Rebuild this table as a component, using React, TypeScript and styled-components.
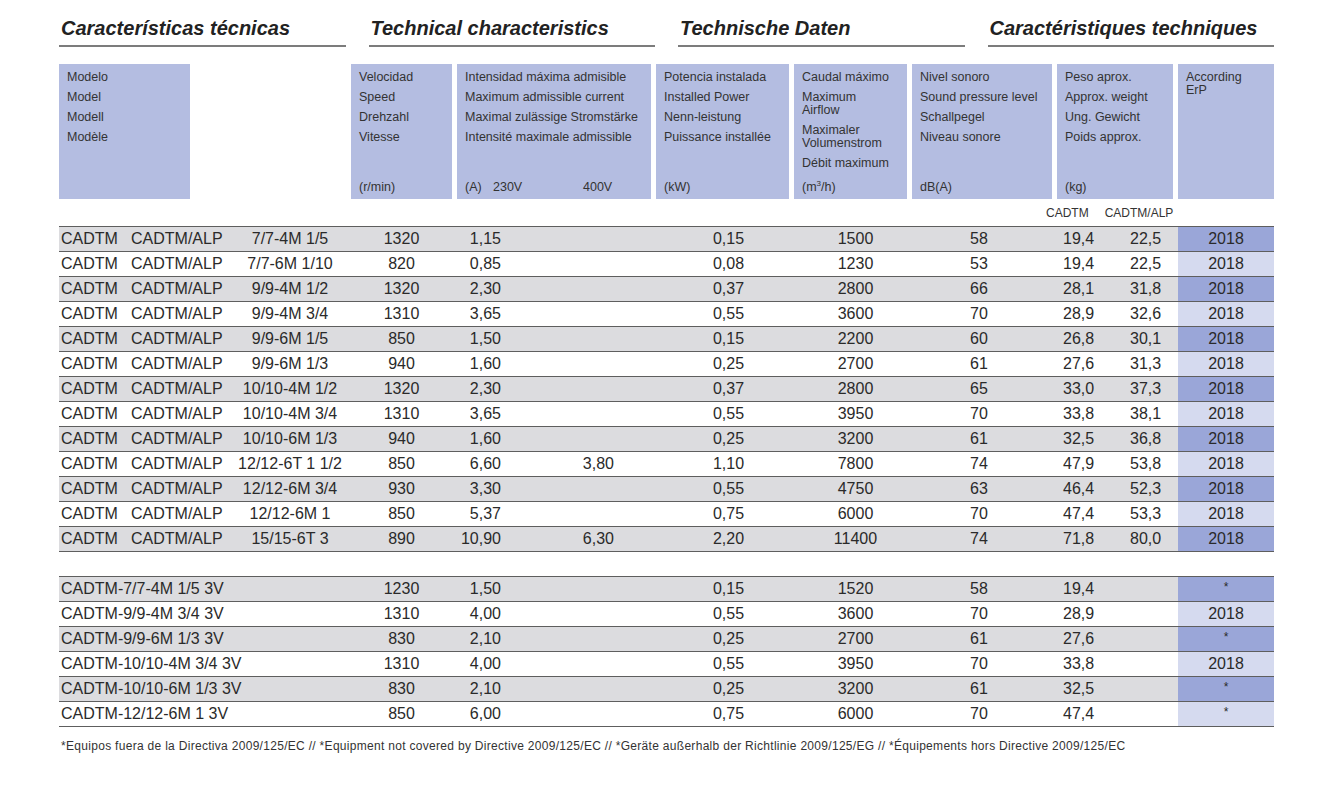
import React from 'react'
import styled, { createGlobalStyle } from 'styled-components'

const COLS = '287px 101px 194px 133px 113px 140px 116px 96px'

const GlobalStyle = createGlobalStyle`
  body {
    margin: 0;
    background: #fff;
    font-family: "Liberation Sans", Arial, sans-serif;
    color: #2c2c2c;
  }
`

const Page = styled.div`
  width: 1215px;
  padding: 16px 0 0 59px;
`

const TitleRow = styled.div`
  display: grid;
  grid-template-columns: repeat(4, 1fr);
  column-gap: 23px;
`

const Title = styled.h2`
  margin: 0;
  padding: 0 0 5px 2px;
  font: italic bold 20px/24px "Liberation Sans", Arial, sans-serif;
  color: #222;
  border-bottom: 2px solid #7c7c7c;
`

const HeaderGrid = styled.div`
  display: grid;
  grid-template-columns: ${COLS};
  column-gap: 5px;
  height: 134px;
  margin-top: 17px;
`

const HeadCell = styled.div<{ $width?: number }>`
  display: flex;
  flex-direction: column;
  gap: 7px;
  width: ${p => (p.$width ? `${p.$width}px` : 'auto')};
  box-sizing: border-box;
  padding: 7px 8px 2px;
  background: #b4bde1;
  font-size: 12.5px;
  line-height: 13px;
  color: #333;
  white-space: nowrap;
`

const Unit = styled.div`
  margin-top: auto;
  line-height: 20px;
`

const UnitPart = styled.span<{ $w: number }>`
  display: inline-block;
  width: ${p => p.$w}px;
`

const Sup = styled.sup`
  font-size: 8px;
  line-height: 0;
  vertical-align: 5px;
`

const SubLabels = styled.div`
  display: grid;
  grid-template-columns: ${COLS};
  column-gap: 5px;
  margin-top: 8px;
  font-size: 12px;
  line-height: 14px;
  color: #333;
`

const SubPair = styled.div`
  grid-column: 7;
  display: flex;
  gap: 16px;
  margin-left: -11px;
  white-space: nowrap;
`

const Table = styled.div<{ $mt: number }>`
  margin-top: ${p => p.$mt}px;
  border-top: 1px solid #5e5e5e;
`

const Row = styled.div<{ $alt: boolean }>`
  display: grid;
  grid-template-columns: ${COLS};
  column-gap: 5px;
  height: 24px;
  border-bottom: 1px solid #5e5e5e;
  background: ${p => (p.$alt ? '#dcdcdf' : '#fff')};
  font-size: 16px;
  line-height: 24px;
  color: #2a2a2a;
  white-space: nowrap;
`

const ModelCell = styled.div`
  display: grid;
  grid-template-columns: 70px 101px 116px;
  padding-left: 2px;
`

const Code = styled.span`
  text-align: center;
`

const Plain = styled.div`
  padding-left: 2px;
`

const Center = styled.div<{ $shift?: number }>`
  text-align: center;
  padding-left: ${p => Math.max(p.$shift ?? 0, 0)}px;
  padding-right: ${p => Math.max(-(p.$shift ?? 0), 0)}px;
`

const Current = styled.div`
  display: grid;
  grid-template-columns: 44px 113px;
  text-align: right;
`

const Weight = styled.div`
  display: grid;
  grid-template-columns: 67px 1fr;
  padding-left: 6px;
`

const Erp = styled.div<{ $alt: boolean }>`
  background: ${p => (p.$alt ? '#9aa6d8' : '#d5daef')};
  text-align: center;
`

const Star = styled.span`
  font-size: 12px;
  vertical-align: top;
  line-height: 20px;
`

const Footer = styled.p`
  margin: 12px 0 0 2px;
  font-size: 12px;
  letter-spacing: 0.3px;
  line-height: 14px;
  color: #333;
  white-space: nowrap;
`

type Item = {
  code: string
  speed: string
  a230: string
  a400: string
  kw: string
  flow: string
  db: string
  kg1: string
  kg2: string
  erp: string
}

const mk = (r: string[]): Item => ({
  code: r[0],
  speed: r[1],
  a230: r[2],
  a400: r[3],
  kw: r[4],
  flow: r[5],
  db: r[6],
  kg1: r[7],
  kg2: r[8],
  erp: r[9],
})

const mainRows: Item[] = [
  ['7/7-4M 1/5', '1320', '1,15', '', '0,15', '1500', '58', '19,4', '22,5', '2018'],
  ['7/7-6M 1/10', '820', '0,85', '', '0,08', '1230', '53', '19,4', '22,5', '2018'],
  ['9/9-4M 1/2', '1320', '2,30', '', '0,37', '2800', '66', '28,1', '31,8', '2018'],
  ['9/9-4M 3/4', '1310', '3,65', '', '0,55', '3600', '70', '28,9', '32,6', '2018'],
  ['9/9-6M 1/5', '850', '1,50', '', '0,15', '2200', '60', '26,8', '30,1', '2018'],
  ['9/9-6M 1/3', '940', '1,60', '', '0,25', '2700', '61', '27,6', '31,3', '2018'],
  ['10/10-4M 1/2', '1320', '2,30', '', '0,37', '2800', '65', '33,0', '37,3', '2018'],
  ['10/10-4M 3/4', '1310', '3,65', '', '0,55', '3950', '70', '33,8', '38,1', '2018'],
  ['10/10-6M 1/3', '940', '1,60', '', '0,25', '3200', '61', '32,5', '36,8', '2018'],
  ['12/12-6T 1 1/2', '850', '6,60', '3,80', '1,10', '7800', '74', '47,9', '53,8', '2018'],
  ['12/12-6M 3/4', '930', '3,30', '', '0,55', '4750', '63', '46,4', '52,3', '2018'],
  ['12/12-6M 1', '850', '5,37', '', '0,75', '6000', '70', '47,4', '53,3', '2018'],
  ['15/15-6T 3', '890', '10,90', '6,30', '2,20', '11400', '74', '71,8', '80,0', '2018'],
].map(mk)

const threeSpeedRows: Item[] = [
  ['CADTM-7/7-4M 1/5 3V', '1230', '1,50', '', '0,15', '1520', '58', '19,4', '', '*'],
  ['CADTM-9/9-4M 3/4 3V', '1310', '4,00', '', '0,55', '3600', '70', '28,9', '', '2018'],
  ['CADTM-9/9-6M 1/3 3V', '830', '2,10', '', '0,25', '2700', '61', '27,6', '', '*'],
  ['CADTM-10/10-4M 3/4 3V', '1310', '4,00', '', '0,55', '3950', '70', '33,8', '', '2018'],
  ['CADTM-10/10-6M 1/3 3V', '830', '2,10', '', '0,25', '3200', '61', '32,5', '', '*'],
  ['CADTM-12/12-6M 1 3V', '850', '6,00', '', '0,75', '6000', '70', '47,4', '', '*'],
].map(mk)

function DataRow({ item, alt, full }: { item: Item; alt: boolean; full: boolean }) {
  return (
    <Row $alt={alt}>
      {full ? (
        <ModelCell>
          <span>CADTM</span>
          <span>CADTM/ALP</span>
          <Code>{item.code}</Code>
        </ModelCell>
      ) : (
        <Plain>{item.code}</Plain>
      )}
      <Center>{item.speed}</Center>
      <Current>
        <span>{item.a230}</span>
        <span>{item.a400}</span>
      </Current>
      <Center $shift={12}>{item.kw}</Center>
      <Center $shift={10}>{item.flow}</Center>
      <Center $shift={-6}>{item.db}</Center>
      <Weight>
        <span>{item.kg1}</span>
        <span>{item.kg2}</span>
      </Weight>
      <Erp $alt={alt}>{item.erp === '*' ? <Star>*</Star> : item.erp}</Erp>
    </Row>
  )
}

export default function App() {
  return (
    <>
      <GlobalStyle />
      <Page>
        <TitleRow>
          <Title>Características técnicas</Title>
          <Title>Technical characteristics</Title>
          <Title>Technische Daten</Title>
          <Title>Caractéristiques techniques</Title>
        </TitleRow>

        <HeaderGrid>
          <HeadCell $width={131}>
            <div>Modelo</div>
            <div>Model</div>
            <div>Modell</div>
            <div>Modèle</div>
          </HeadCell>
          <HeadCell>
            <div>Velocidad</div>
            <div>Speed</div>
            <div>Drehzahl</div>
            <div>Vitesse</div>
            <Unit>(r/min)</Unit>
          </HeadCell>
          <HeadCell>
            <div>Intensidad máxima admisible</div>
            <div>Maximum admissible current</div>
            <div>Maximal zulässige Stromstärke</div>
            <div>Intensité maximale admissible</div>
            <Unit>
              <UnitPart $w={28}>(A)</UnitPart>
              <UnitPart $w={90}>230V</UnitPart>
              <span>400V</span>
            </Unit>
          </HeadCell>
          <HeadCell>
            <div>Potencia instalada</div>
            <div>Installed Power</div>
            <div>Nenn-leistung</div>
            <div>Puissance installée</div>
            <Unit>(kW)</Unit>
          </HeadCell>
          <HeadCell>
            <div>Caudal máximo</div>
            <div>
              Maximum
              <br />
              Airflow
            </div>
            <div>
              Maximaler
              <br />
              Volumenstrom
            </div>
            <div>Débit maximum</div>
            <Unit>
              (m<Sup>3</Sup>/h)
            </Unit>
          </HeadCell>
          <HeadCell>
            <div>Nivel sonoro</div>
            <div>Sound pressure level</div>
            <div>Schallpegel</div>
            <div>Niveau sonore</div>
            <Unit>dB(A)</Unit>
          </HeadCell>
          <HeadCell>
            <div>Peso aprox.</div>
            <div>Approx. weight</div>
            <div>Ung. Gewicht</div>
            <div>Poids approx.</div>
            <Unit>(kg)</Unit>
          </HeadCell>
          <HeadCell>
            <div>
              According
              <br />
              ErP
            </div>
          </HeadCell>
        </HeaderGrid>

        <SubLabels>
          <SubPair>
            <span>CADTM</span>
            <span>CADTM/ALP</span>
          </SubPair>
        </SubLabels>

        <Table $mt={6}>
          {mainRows.map((item, i) => (
            <DataRow key={i} item={item} alt={i % 2 === 0} full />
          ))}
        </Table>

        <Table $mt={24}>
          {threeSpeedRows.map((item, i) => (
            <DataRow key={i} item={item} alt={i % 2 === 0} full={false} />
          ))}
        </Table>

        <Footer>
          *Equipos fuera de la Directiva 2009/125/EC // *Equipment not covered by Directive 2009/125/EC // *Geräte
          außerhalb der Richtlinie 2009/125/EG // *Équipements hors Directive 2009/125/EC
        </Footer>
      </Page>
    </>
  )
}
